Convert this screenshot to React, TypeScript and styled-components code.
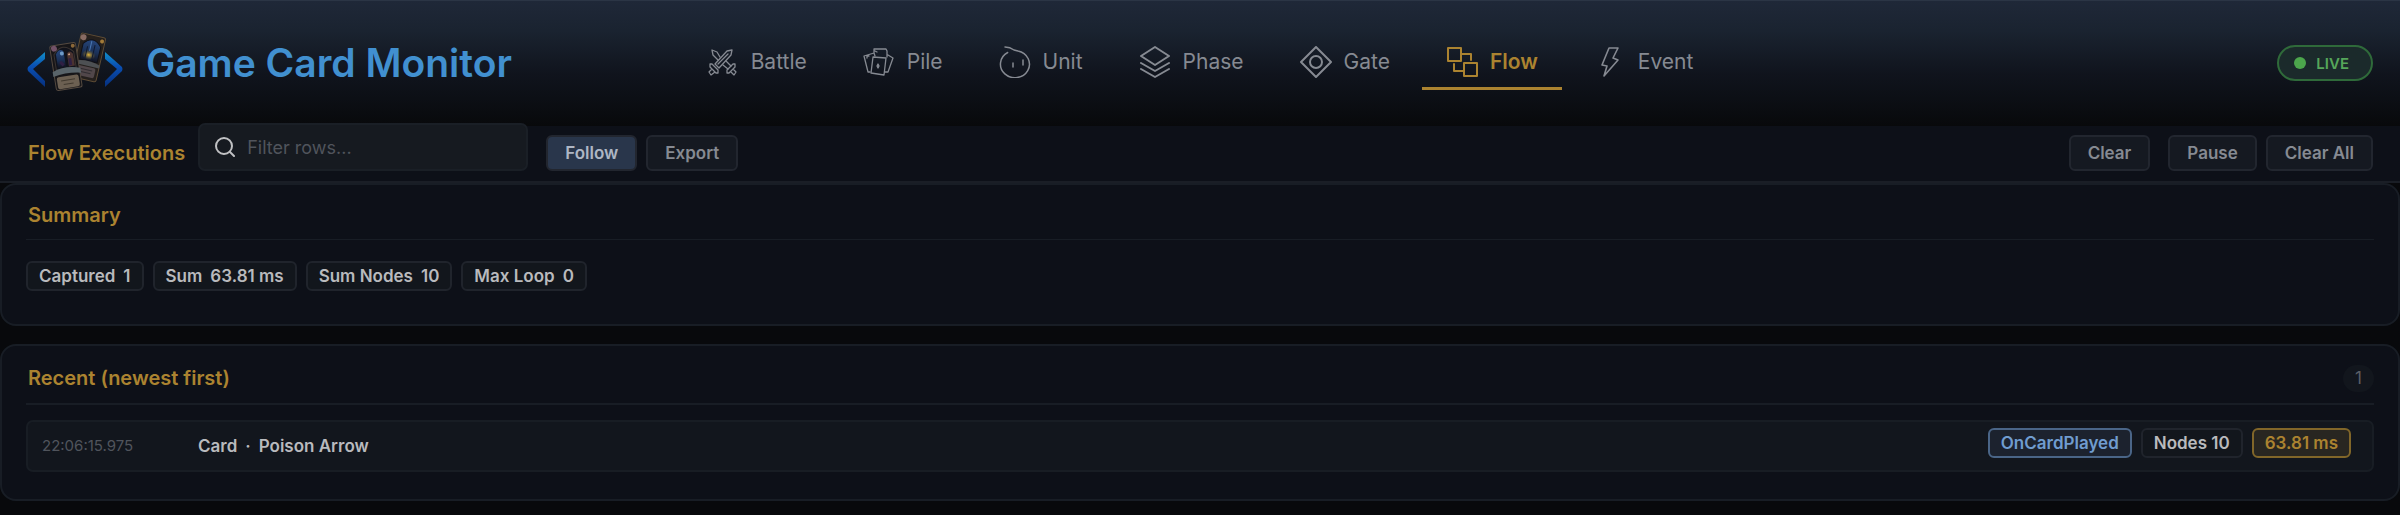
import React from "react";
import styled, { createGlobalStyle, css } from "styled-components";

const Global = createGlobalStyle`
  *, *::before, *::after { box-sizing: border-box; }
  body {
    margin: 0;
    background: #08090c;
    color: #b9babd;
    font-family: Inter, "Liberation Sans", sans-serif;
    font-size: 17px;
  }
  h1, h2, ul { margin: 0; padding: 0; }
  button, input { font-family: inherit; }
`;

const gold = "#ab8330";

const Header = styled.header`
  display: grid;
  grid-template-columns: 1fr auto 1fr;
  align-items: center;
  height: 126px;
  padding: 0 27px 1px;
  border-top: 1px solid #2b3545;
  background: linear-gradient(180deg, #1f2838 0%, #1a2330 24%, #10141d 58%, #0c0f15 78%, #08090b 100%);
`;

const Brand = styled.div`
  display: flex;
  align-items: center;
  gap: 21px;
`;

const Title = styled.h1`
  color: #4190d0;
  font-size: 39px;
  font-weight: 600;
  line-height: 48px;
  white-space: nowrap;
`;

const Nav = styled.nav`
  display: flex;
  gap: 8px;
`;

const NavLink = styled.a<{ $active?: boolean }>`
  display: flex;
  align-items: center;
  gap: 12px;
  height: 54px;
  padding: 0 24px;
  border-bottom: 3px solid ${(p) => (p.$active ? gold : "transparent")};
  color: ${(p) => (p.$active ? gold : "#868a92")};
  font-size: 21px;
  font-weight: ${(p) => (p.$active ? 600 : 400)};
  text-decoration: none;
  svg { width: 32px; height: 32px; }
`;

const Live = styled.div`
  display: flex;
  align-items: center;
  justify-self: end;
  gap: 10px;
  height: 36px;
  padding: 0 22px 0 15px;
  border: 2px solid #2f6a3a;
  border-radius: 18px;
  background: #1b2a2b;
  color: #56a65a;
  font-size: 15px;
  font-weight: 600;
`;

const Dot = styled.span`
  width: 12px;
  height: 12px;
  border-radius: 50%;
  background: #4ca64c;
`;

const Toolbar = styled.div`
  display: flex;
  align-items: flex-end;
  gap: 9px;
  height: 57px;
  padding: 0 27px 10px 28px;
  border-bottom: 2px solid #1a1e26;
  background: #0d1018;
`;

const Heading = styled.h2`
  color: ${gold};
  font-size: 20px;
  font-weight: 600;
  line-height: 36px;
  white-space: nowrap;
`;

const Filter = styled.label`
  display: flex;
  align-items: center;
  gap: 12px;
  width: 330px;
  height: 48px;
  margin: 0 9px 0 4px;
  padding: 0 15px;
  border: 2px solid #1a1f26;
  border-radius: 7px;
  background: #161a20;
  color: #c0c1c3;
  svg { flex: none; width: 20px; height: 20px; }
  input {
    flex: 1;
    min-width: 0;
    padding: 0;
    border: 0;
    outline: 0;
    background: none;
    color: inherit;
    font-size: 18px;
  }
  input::placeholder { color: #50545c; opacity: 1; }
`;

const Button = styled.button<{ $active?: boolean }>`
  height: 36px;
  padding: 0 17px;
  border: 2px solid #22262f;
  border-radius: 6px;
  background: ${(p) => (p.$active ? "#29364b" : "#151921")};
  color: ${(p) => (p.$active ? "#aeb6c4" : "#868a92")};
  font-size: 17px;
  font-weight: 600;
  white-space: nowrap;
`;

const Actions = styled.div`
  display: flex;
  gap: 9px;
  &:last-child { margin-left: 9px; }
`;

const Spacer = styled.div`
  flex: 1;
`;

const Main = styled.main`
  display: flex;
  flex-direction: column;
  gap: 18px;
`;

const Panel = styled.section`
  padding: 12px 24px 27px;
  border: 2px solid #181d25;
  border-radius: 16px;
  background: #0d1018;
`;

const PanelHead = styled.div`
  display: flex;
  align-items: center;
  justify-content: space-between;
  padding: 2px 0 7px 2px;
  border-bottom: 2px solid #181d25;
`;

const SummaryHead = styled(PanelHead)`
  padding: 0 0 6px 2px;
  border-bottom: 1px solid #181d25;
`;

const Count = styled.span`
  padding: 0 12px;
  border-radius: 14px;
  background: #12161d;
  color: #5b5f67;
  font-size: 17px;
  line-height: 27px;
`;

const Chips = styled.div`
  display: flex;
  gap: 9px;
`;

const SummaryChips = styled(Chips)`
  padding: 21px 0 6px;
`;

type Tone = "plain" | "blue" | "gold";
const tones = {
  plain: css`border-color: #20242c; background: #12161c; color: #b9babd;`,
  blue: css`border-color: #4a6587; background: #1c222e; color: #709ccf;`,
  gold: css`border-color: #816629; background: #282621; color: #ab8330;`,
};

const Chip = styled.span<{ $tone?: Tone }>`
  display: flex;
  gap: 8px;
  padding: 0 11px;
  border: 2px solid;
  border-radius: 6px;
  font-size: 17px;
  font-weight: 600;
  line-height: 26px;
  white-space: nowrap;
  ${(p) => tones[p.$tone ?? "plain"]}
`;

const Rows = styled.ul`
  list-style: none;
  padding-top: 15px;
`;

const Row = styled.li`
  display: flex;
  align-items: flex-start;
  height: 52px;
  padding: 6px 21px 6px 14px;
  border: 2px solid #181d24;
  border-radius: 7px;
  background: #12161d;
`;

const Time = styled.time`
  width: 156px;
  color: #50545c;
  font-size: 15px;
  line-height: 36px;
`;

const Name = styled.div`
  display: flex;
  flex: 1;
  gap: 8px;
  font-size: 17px;
  font-weight: 600;
  line-height: 36px;
`;

const stroke = {
  fill: "none",
  stroke: "currentColor",
  strokeLinecap: "round" as const,
  strokeLinejoin: "round" as const,
  "aria-hidden": true,
};

const Logo = () => (
  <svg width="98" height="62" viewBox="0 0 98 62" aria-hidden="true">
    <defs>
      <linearGradient id="chev" x1="0" y1="0" x2="0" y2="1">
        <stop offset="0" stopColor="#1190c8" />
        <stop offset="0.4" stopColor="#0a50b4" />
        <stop offset="1" stopColor="#06307e" />
      </linearGradient>
      <linearGradient id="night" x1="0" y1="0" x2="0" y2="1">
        <stop offset="0" stopColor="#27477c" />
        <stop offset="0.55" stopColor="#1b3158" />
        <stop offset="1" stopColor="#12131f" />
      </linearGradient>
      <radialGradient id="lamp">
        <stop offset="0" stopColor="#e0b53c" />
        <stop offset="1" stopColor="#70602e" stopOpacity="0" />
      </radialGradient>
    </defs>
    <path d="M18 20v7L6 37l12 12v6L1 39q-1-2 0-4z" fill="url(#chev)" />
    <path d="M78 20v7l12 10-12 12v6l17-16q1-2 0-4z" fill="url(#chev)" />
    <g transform="rotate(13 62 26)">
      <rect x="49" y="3" width="25" height="45" rx="2" fill="#25201d" stroke="#5e4c35" />
      <path d="M53 29V13q9-11 18 0v16z" fill="url(#night)" stroke="#0f1017" />
      <ellipse cx="61" cy="23" rx="7" ry="5" fill="url(#lamp)" />
      <path d="M58 15v13M65 12v16" stroke="#101a30" />
      <path d="M61 9v10" stroke="#4a78b4" />
      <path d="M50 31q12-4 24 0v3H50z" fill="#4d5053" />
      <rect x="53" y="35" width="18" height="10" rx="2" fill="#51474a" />
      <path d="M56 38h12M57 41h10" stroke="#302d31" />
      <circle cx="52" cy="7" r="3" fill="#886b63" />
      <circle cx="71" cy="7" r="2" fill="#a27b39" />
    </g>
    <g transform="translate(0 -1) rotate(-9 39 36)">
      <rect x="26" y="13" width="26" height="45" rx="2" fill="#171619" stroke="#554a40" />
      <path d="M29 38V22q10-12 20 0v16z" fill="#11131c" stroke="#3b3431" />
      <path d="M31 36V22q4-6 8-2v16z" fill="url(#night)" />
      <path d="M42 36V23q3-4 6 1v12z" fill="#4b3330" />
      <circle cx="37" cy="22" r="2" fill="#6f9bc8" />
      <circle cx="44" cy="24" r="1" fill="#d4a68b" />
      <path d="M34 30l3 4M44 28v7" stroke="#302044" strokeWidth="3" />
      <path d="M25 39q13-5 28 0v5q-14-3-28 0z" fill="#59646a" />
      <rect x="28" y="45" width="22" height="12" rx="2" fill="#6c6052" />
      <path d="M32 49h14M34 53h10" stroke="#41392f" />
      <circle cx="30" cy="16" r="3" fill="#735268" />
      <circle cx="49" cy="16" r="2" fill="#8b6839" />
    </g>
  </svg>
);

const Swords = () => (
  <svg viewBox="0 0 32 32" {...stroke} strokeWidth="1.3">
    <path d="M25 4l-5 1L8 18l4 4L24 9zM21 8L11 18" />
    <path d="M13 11L10 6 5 4l1 5 5 5M19 15l5 5M16 19l5 4" />
    <path d="M3 18l2 0 6 6 0 3-2 0-6-6zM5 23l-3 3 2 3 4-3" />
    <path d="M28 18l-2 0-6 6 0 3 2 0 6-6zM26 23l3 3-2 3-3-3" />
  </svg>
);

const Cards = () => (
  <svg viewBox="0 0 32 32" {...stroke} strokeWidth="1.3">
    <path d="M10 11l13 1-2 17-13-2z" />
    <path d="M7 26H5L1 10l10-3 1 3M11 7V3h12l1 2v6M25 9l5 3-5 14h-3M4 12v-2h2M12 5l2 1" />
    <path d="M15 18l1 2-1 2-1-2z" fill="currentColor" />
  </svg>
);

const Unit = () => (
  <svg viewBox="0 0 32 32" {...stroke} strokeWidth="1.5">
    <path d="M6 1q5 0 9 3l4 1a14.500 13.500 0 1 1-10.300 1.500" />
    <path d="M14 17v4M24 14v5" />
  </svg>
);

const Layers = () => (
  <svg viewBox="0 0 32 32" {...stroke} strokeWidth="2">
    <path d="M16 1l14 9-14 9L2 10zM2 17l14 8 14-8M2 23l14 8 14-8" />
  </svg>
);

const Gate = () => (
  <svg viewBox="0 0 32 32" {...stroke} strokeWidth="2">
    <path d="M16 1l15 15-15 15L1 16z" />
    <circle cx="16" cy="16" r="6" />
  </svg>
);

const Flow = () => (
  <svg viewBox="0 0 32 32" {...stroke} strokeWidth="2">
    <path d="M2 2h13v13H2zM18 17h13v13H18zM15 8h10v6M8 18v7h10" />
  </svg>
);

const Bolt = () => (
  <svg viewBox="0 0 32 32" {...stroke} strokeWidth="1.600">
    <path d="M15 2h9l-5 10 5 2-14 16 3-10-5-1z" />
  </svg>
);

const tabs = [
  { label: "Battle", Icon: Swords },
  { label: "Pile", Icon: Cards },
  { label: "Unit", Icon: Unit },
  { label: "Phase", Icon: Layers },
  { label: "Gate", Icon: Gate },
  { label: "Flow", Icon: Flow },
  { label: "Event", Icon: Bolt },
];

const summary = [
  ["Captured", "1"],
  ["Sum", "63.81 ms"],
  ["Sum Nodes", "10"],
  ["Max Loop", "0"],
];

export default function App() {
  return (
    <>
      <Global />
      <Header>
        <Brand>
          <Logo />
          <Title>Game Card Monitor</Title>
        </Brand>
        <Nav>
          {tabs.map(({ label, Icon }) => (
            <NavLink key={label} href={`#${label.toLowerCase()}`} $active={label === "Flow"}>
              <Icon />
              {label}
            </NavLink>
          ))}
        </Nav>
        <Live>
          <Dot />
          LIVE
        </Live>
      </Header>
      <Toolbar>
        <Heading>Flow Executions</Heading>
        <Filter>
          <svg viewBox="0 0 20 20" {...stroke} strokeWidth="2">
            <circle cx="9" cy="9" r="8" />
            <path d="M15 15l4 4" />
          </svg>
          <input type="text" placeholder="Filter rows..." aria-label="Filter rows" />
        </Filter>
        <Actions>
          <Button type="button" $active>Follow</Button>
          <Button type="button">Export</Button>
        </Actions>
        <Spacer />
        <Button type="button">Clear</Button>
        <Actions>
          <Button type="button">Pause</Button>
          <Button type="button">Clear All</Button>
        </Actions>
      </Toolbar>
      <Main>
        <Panel>
          <SummaryHead>
            <Heading>Summary</Heading>
          </SummaryHead>
          <SummaryChips>
            {summary.map(([label, value]) => (
              <Chip key={label}>
                <span>{label}</span>
                <span>{value}</span>
              </Chip>
            ))}
          </SummaryChips>
        </Panel>
        <Panel>
          <PanelHead>
            <Heading>Recent (newest first)</Heading>
            <Count>1</Count>
          </PanelHead>
          <Rows>
            <Row>
              <Time>22:06:15.975</Time>
              <Name>
                <span>Card</span>
                <span>·</span>
                <span>Poison Arrow</span>
              </Name>
              <Chips>
                <Chip $tone="blue">OnCardPlayed</Chip>
                <Chip>Nodes 10</Chip>
                <Chip $tone="gold">63.81 ms</Chip>
              </Chips>
            </Row>
          </Rows>
        </Panel>
      </Main>
    </>
  );
}
